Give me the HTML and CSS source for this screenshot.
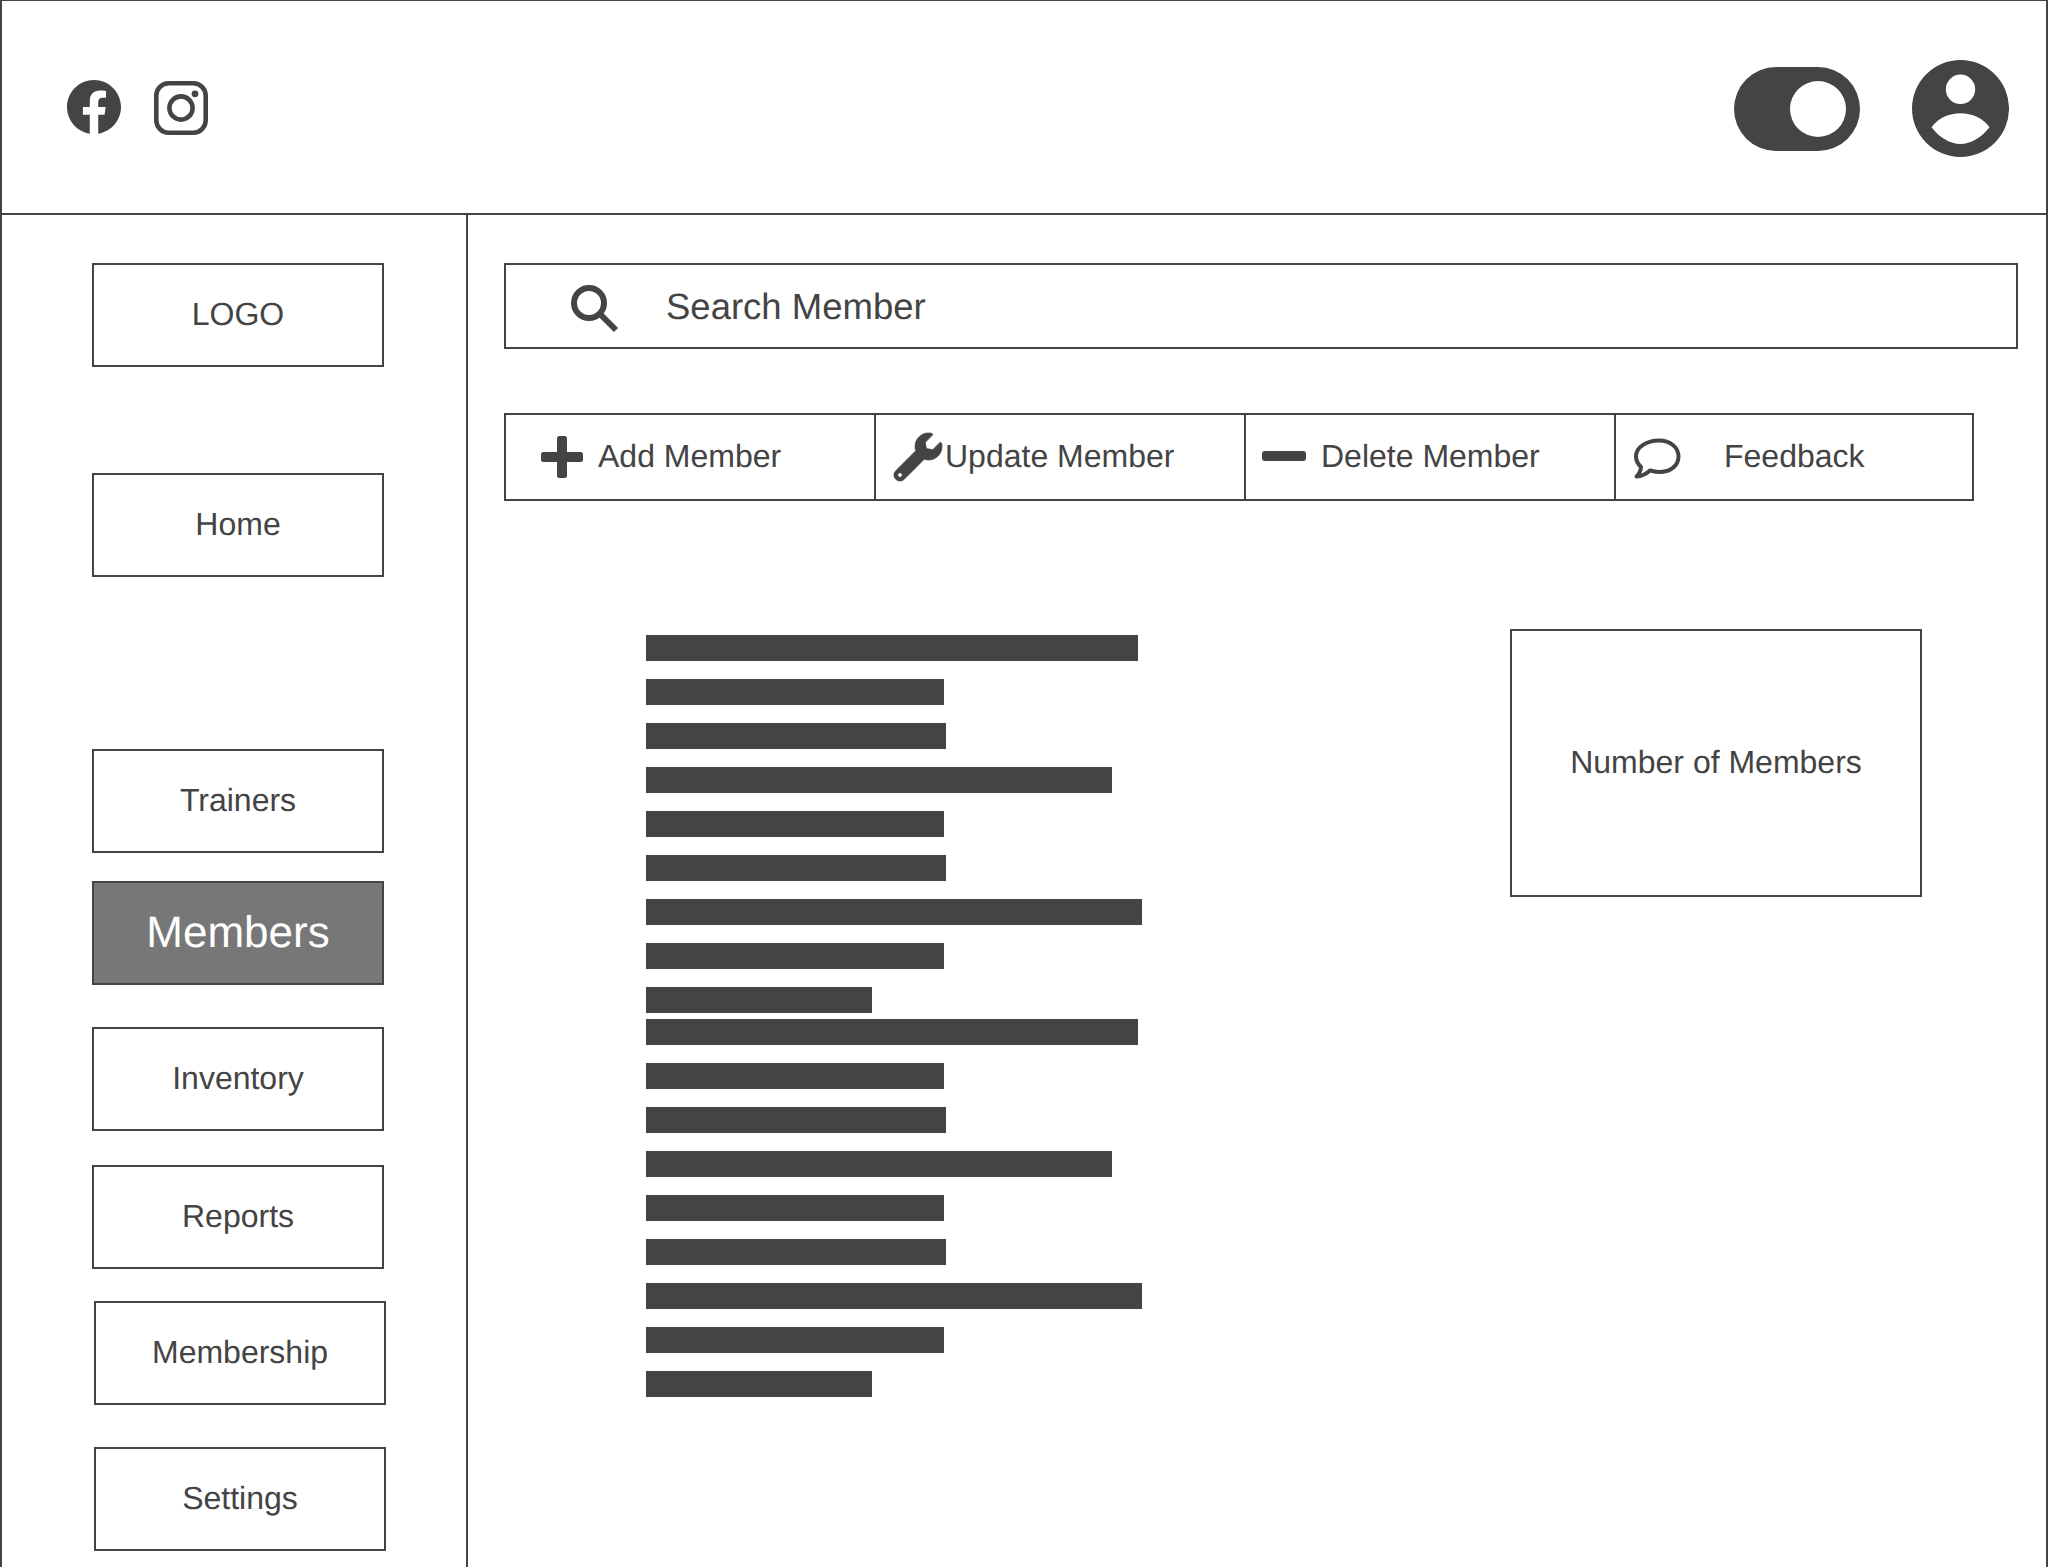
FILE: index.html
```html
<!DOCTYPE html>
<html lang="en">
<head>
<meta charset="utf-8">
<title>Members</title>
<link rel="stylesheet" href="styles.css">
</head>
<body>
<div class="frame">
  <header class="topbar">
    <div class="social">
      <svg class="icon-fb" viewBox="8 8 496 496"><path d="M504 256C504 119 393 8 256 8S8 119 8 256c0 123.78 90.69 226.38 209.25 245V327.69h-63V256h63v-54.64c0-62.15 37-96.48 93.67-96.48 27.14 0 55.52 4.84 55.52 4.84v61h-31.28c-30.8 0-40.41 19.12-40.41 38.73V256h68.78l-11 71.69h-57.78V501C413.31 482.38 504 379.78 504 256z"/></svg>
      <svg class="icon-ig" viewBox="0 0 54 54"><rect class="line" x="2.3" y="2.3" width="49.4" height="49.4" rx="12.5"/><circle class="line" cx="27" cy="27" r="11.6"/><circle cx="41" cy="12.8" r="3.4"/></svg>
    </div>
    <div class="account">
      <svg class="icon-toggle" viewBox="0 0 126 84"><path fill-rule="evenodd" d="M42 0h42a42 42 0 0 1 0 84H42A42 42 0 0 1 42 0zM84 14a28 28 0 1 0 0 56 28 28 0 0 0 0-56z"/></svg>
      <svg class="icon-user" viewBox="0 0 97 97"><path fill-rule="evenodd" d="M48.5 0a48.5 48.5 0 1 1 0 97 48.5 48.5 0 0 1 0-97zM48.5 14.600a14.700 14.700 0 1 0 0 29.400 14.700 14.700 0 0 0 0-29.400zM19.500 67.300C28 78 38 84 48.500 84S69 78 77.500 67.300C71 58 60 53.300 48.500 53.300S26 58 19.500 67.300z"/></svg>
    </div>
  </header>
  <div class="body">
    <nav class="sidebar">
      <div class="nav-box logo">LOGO</div>
      <div class="nav-box home">Home</div>
      <div class="nav-box trainers">Trainers</div>
      <div class="nav-box members">Members</div>
      <div class="nav-box inventory">Inventory</div>
      <div class="nav-box reports">Reports</div>
      <div class="nav-box membership">Membership</div>
      <div class="nav-box settings">Settings</div>
    </nav>
    <main class="content">
      <div class="search">
        <svg class="icon-search" viewBox="0 0 47 46"><circle class="line" cx="18" cy="18" r="15"/><path class="line handle" d="M29.500 29.500L45 45"/></svg>
        <span class="search-label">Search Member</span>
      </div>
      <div class="toolbar">
        <div class="tool tool-add">
          <svg class="icon-plus" viewBox="0 0 42 42"><path d="M18.500 0h5a2.500 2.500 0 0 1 2.500 2.500V16h13.500a2.500 2.500 0 0 1 2.500 2.500v5a2.500 2.500 0 0 1-2.500 2.500H26v13.500a2.500 2.500 0 0 1-2.500 2.500h-5a2.500 2.500 0 0 1-2.500-2.500V26H2.500A2.500 2.500 0 0 1 0 23.500v-5A2.500 2.500 0 0 1 2.500 16H16V2.500A2.500 2.500 0 0 1 18.500 0z"/></svg>
          <span class="tool-label">Add Member</span>
        </div>
        <div class="tool tool-update">
          <svg class="icon-wrench" viewBox="0 0 512 512"><path d="M507.730 109.100c-2.240-9.030-13.540-12.090-20.120-5.510l-74.360 74.360-67.880-11.310-11.310-67.880 74.360-74.360c6.620-6.620 3.430-17.900-5.660-20.160-47.380-11.740-99.550.91-136.580 37.930-39.640 39.640-50.550 97.100-34.050 147.200L18.740 402.760c-24.990 24.990-24.990 65.510 0 90.500 24.990 24.990 65.510 24.990 90.500 0l213.210-213.210c50.120 16.710 107.470 5.680 147.370-34.220 37.070-37.070 49.700-89.320 37.910-136.730zM64 472c-13.250 0-24-10.750-24-24 0-13.260 10.750-24 24-24s24 10.740 24 24c0 13.250-10.750 24-24 24z"/></svg>
          <span class="tool-label">Update Member</span>
        </div>
        <div class="tool tool-delete">
          <svg class="icon-minus" viewBox="0 0 44 10"><rect width="44" height="10" rx="3"/></svg>
          <span class="tool-label">Delete Member</span>
        </div>
        <div class="tool tool-feedback">
          <svg class="icon-chat" viewBox="0 0 47 41"><path class="line" d="M25 2.500C36 2.500 44.500 9 44.500 18.500S36 34 25 34c-3.500 0-6.500-.6-9-1.600C12.500 35.500 8 38 2.500 38.500 5 36 6.800 32.500 7 29 3.800 26 2 22.500 2 18.500 2 9 13 2.500 25 2.500z"/></svg>
          <span class="tool-label">Feedback</span>
        </div>
      </div>
      <div class="lower">
        <div class="bars">
          <div class="bar-group">
            <div class="bar" style="width:492px"></div>
            <div class="bar" style="width:298px"></div>
            <div class="bar" style="width:300px"></div>
            <div class="bar" style="width:466px"></div>
            <div class="bar" style="width:298px"></div>
            <div class="bar" style="width:300px"></div>
            <div class="bar" style="width:496px"></div>
            <div class="bar" style="width:298px"></div>
            <div class="bar" style="width:226px"></div>
          </div>
          <div class="bar-group">
            <div class="bar" style="width:492px"></div>
            <div class="bar" style="width:298px"></div>
            <div class="bar" style="width:300px"></div>
            <div class="bar" style="width:466px"></div>
            <div class="bar" style="width:298px"></div>
            <div class="bar" style="width:300px"></div>
            <div class="bar" style="width:496px"></div>
            <div class="bar" style="width:298px"></div>
            <div class="bar" style="width:226px"></div>
          </div>
        </div>
        <div class="stat">Number of Members</div>
      </div>
    </main>
  </div>
</div>
</body>
</html>
```
FILE: styles.css
```css
* { box-sizing: border-box; }
html, body { margin: 0; padding: 0; height: 100%; background: #fff; }
body {
  font-family: "Liberation Sans", Arial, sans-serif;
  color: #444;
  overflow: hidden;
  text-rendering: geometricPrecision;
}
svg { display: block; flex: none; fill: #444; }
svg .line { fill: none; stroke: #444; }

.frame {
  width: 2048px;
  height: 1567px;
  border-top: 1px solid #444;
  border-left: 2px solid #444;
  border-right: 2px solid #444;
  display: flex;
  flex-direction: column;
  overflow: hidden;
  opacity: 0.999;
}

.topbar {
  flex: none;
  height: 214px;
  border-bottom: 2px solid #444;
  display: flex;
  justify-content: space-between;
  align-items: center;
}
.social { display: flex; align-items: center; gap: 33px; padding-left: 65px; }
.icon-fb { width: 54px; height: 54px; }
.icon-ig { width: 54px; height: 54px; margin-top: 2px; }
.icon-ig .line { stroke-width: 4.6; }
.account { display: flex; align-items: center; gap: 52px; padding-right: 37px; padding-top: 3px; }
.icon-toggle { width: 126px; height: 84px; }
.icon-user { width: 97px; height: 97px; }

.body { flex: 1; display: flex; min-height: 0; }
.sidebar {
  flex: none;
  width: 466px;
  border-right: 2px solid #444;
  padding: 48px 0 0 90px;
}
.nav-box {
  width: 292px;
  height: 104px;
  border: 2px solid #444;
  display: flex;
  align-items: center;
  justify-content: center;
  font-size: 32px;
  padding-bottom: 2px;
}
.home { margin-top: 106px; }
.trainers { margin-top: 172px; }
.members { margin-top: 28px; background: #777; color: #fff; font-size: 44px; padding-bottom: 0; }
.inventory { margin-top: 42px; }
.reports { margin-top: 34px; }
.membership { margin-top: 32px; margin-left: 2px; }
.settings { margin-top: 42px; margin-left: 2px; }

.content { flex: 1; min-width: 0; padding: 48px 28px 0 36px; }
.search {
  height: 86px;
  border: 2px solid #444;
  display: flex;
  align-items: center;
  padding-left: 65px;
  font-size: 36.5px;
}
.icon-search { width: 47px; height: 46px; margin-right: 48px; margin-top: 4px; overflow: visible; }
.icon-search .line { stroke-width: 6; }
.search-label { padding-top: 1px; }

.toolbar {
  width: 1470px;
  height: 88px;
  margin-top: 64px;
  border: 2px solid #444;
  display: flex;
  font-size: 32px;
}
.tool { display: flex; align-items: center; border-right: 2px solid #444; width: 370px; }
.tool:last-child { border-right: 0; flex: 1; width: auto; }
.tool-label { padding-bottom: 2px; }
.tool-add { padding-left: 35px; }
.tool-update { padding-left: 18px; }
.tool-delete { padding-left: 16px; }
.tool-feedback { padding-left: 18px; }
.icon-plus { width: 42px; height: 42px; margin-right: 15px; }
.icon-wrench { width: 48px; height: 48px; margin-right: 3px; stroke: #444; stroke-width: 8; overflow: visible; }
.icon-minus { width: 44px; height: 10px; margin-right: 15px; margin-bottom: 2px; }
.icon-chat { width: 47px; height: 41px; margin-right: 43px; margin-top: 2px; }
.icon-chat .line { stroke-width: 4; stroke-linejoin: round; }

.lower { display: flex; align-items: flex-start; padding: 128px 96px 0 142px; }
.bars { flex: 1; padding-top: 6px; display: flex; flex-direction: column; gap: 6px; }
.bar-group { display: flex; flex-direction: column; gap: 18px; }
.bar { height: 26px; background: #444; }
.stat {
  flex: none;
  width: 412px;
  height: 268px;
  border: 2px solid #444;
  display: flex;
  align-items: center;
  justify-content: center;
  font-size: 32px;
  padding-bottom: 2px;
}
```
